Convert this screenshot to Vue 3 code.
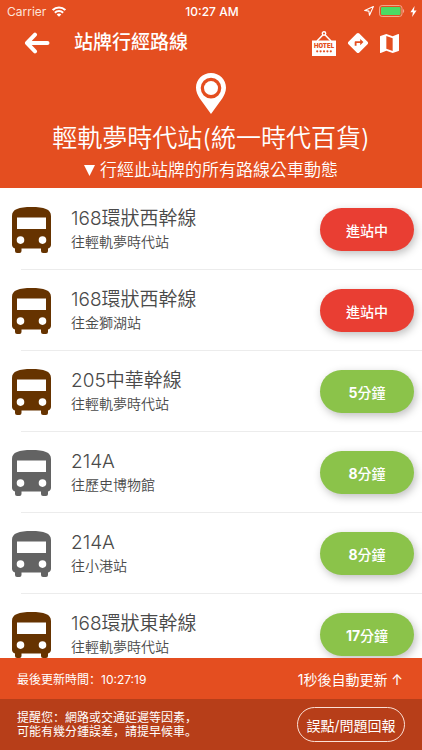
<template>
  <div class="page">
    <header class="header">
      <div class="status-bar">
        <div class="carrier">
          <span>Carrier</span>
          <svg width="14" height="11" viewBox="0 0 14 11" aria-hidden="true">
            <g fill="none" stroke="#fff" stroke-width="2.1">
              <path d="M0.7 4.1a9 9 0 0 1 12.6 0" />
              <path d="M2.9 6.7a5.8 5.8 0 0 1 8.2 0" />
            </g>
            <path fill="#fff" d="M7 10.8 4.7 8.5a3.1 3.1 0 0 1 4.6 0z" />
          </svg>
        </div>
        <span class="clock">10:27 AM</span>
        <div class="indicators">
          <svg width="10" height="10" viewBox="0 0 10 10" aria-hidden="true">
            <path fill="none" stroke="currentColor" stroke-width="1.1" stroke-linejoin="round" d="M9.4 0.6 0.7 4.5l4.2.6.6 4.2z" />
          </svg>
          <svg width="26" height="12" viewBox="0 0 26 12" aria-hidden="true">
            <rect x="0.5" y="0.5" width="22.5" height="11" rx="2.6" fill="none" stroke="#f3a58c" />
            <rect x="2" y="2" width="19.5" height="8" rx="1.2" fill="#4cd964" />
            <path d="M24 4v4c1.6-.6 1.6-3.4 0-4z" fill="#f3a58c" />
          </svg>
          <svg width="7" height="11" viewBox="0 0 7 11" aria-hidden="true">
            <path fill="currentColor" d="M4.6 0 0.4 6.2h2.5L2.1 11l4.5-6.5H3.9z" />
          </svg>
        </div>
      </div>

      <nav class="toolbar">
        <button class="icon-btn" aria-label="返回" @click="goBack">
          <svg width="26" height="22" viewBox="0 0 26 22" fill="none" stroke="currentColor" stroke-width="4" stroke-linecap="round" stroke-linejoin="round">
            <path d="M11 2.6 3 11l8 8.4M3.6 11H23.5" />
          </svg>
        </button>
        <h1>站牌行經路線</h1>
        <div class="actions">
          <button class="icon-btn" aria-label="附近旅館">
            <svg width="24" height="25" viewBox="0 0 24 25">
              <path fill="none" stroke="currentColor" stroke-width="1.5" d="M5 10 10.8 4M19 10 13.2 4" />
              <circle cx="12" cy="2.5" r="1.7" fill="none" stroke="currentColor" stroke-width="1.4" />
              <path fill="currentColor" d="M0 9.5h24V25H0z" />
              <text x="12" y="17" class="hotel-text" text-anchor="middle">HOTEL</text>
              <g fill="#e44e20">
                <circle v-for="n in 5" :key="n" :cx="n * 3.4 + 1.8" cy="20.3" r="1.1" />
              </g>
            </svg>
          </button>
          <button class="icon-btn" aria-label="路線規劃">
            <svg width="22" height="22" viewBox="0 0 24 24">
              <path fill="currentColor" d="m22.43 10.59-9.01-9.01c-.75-.75-2.07-.76-2.83 0l-9 9c-.78.78-.78 2.04 0 2.82l9 9c.39.39.9.58 1.41.58.51 0 1.02-.19 1.41-.58l8.99-8.99c.79-.76.8-2.02.03-2.82zM14.4 14.5V12h-4v3h-2v-4c0-.55.45-1 1-1h5V7.5l3.5 3.5-3.5 3.5z" />
            </svg>
          </button>
          <button class="icon-btn" aria-label="地圖">
            <svg width="19" height="19" viewBox="3 3 18 18">
              <path fill="currentColor" d="m20.5 3-.16.03L15 5.1 9 3 3.36 4.9c-.21.07-.36.25-.36.48V20.5c0 .28.22.5.5.5l.16-.03L9 18.9l6 2.1 5.64-1.9c.21-.07.36-.25.36-.48V3.5c0-.28-.22-.5-.5-.5zM15 19l-6-2.11V5l6 2.11V19z" />
            </svg>
          </button>
        </div>
      </nav>

      <div class="stop">
        <svg width="30" height="41" viewBox="0 0 30 41" aria-hidden="true">
          <path fill="currentColor" fill-rule="evenodd" d="M15 0C6.6 0 0 6.5 0 14.8 0 18.6 1.6 22 3.6 25.2L15 41l11.4-15.8C28.4 22 30 18.6 30 14.8 30 6.5 23.4 0 15 0zm0 4.8a10.3 10.3 0 1 1 0 20.6 10.3 10.3 0 0 1 0-20.6z" />
          <circle cx="15" cy="15.1" r="7" fill="currentColor" />
        </svg>
        <h2>輕軌夢時代站(統一時代百貨)</h2>
        <p>
          <svg width="11" height="11" viewBox="0 0 11 11" aria-hidden="true">
            <path fill="currentColor" d="M0 0h11L5.500 11z" />
          </svg>
          行經此站牌的所有路線公車動態
        </p>
      </div>
    </header>

    <main class="routes">
      <ul>
        <li v-for="(route, index) in routes" :key="index">
          <svg class="bus" :class="route.color" width="39" height="46" viewBox="0 0 39 46" aria-hidden="true">
            <path fill="currentColor" fill-rule="evenodd" d="M0 9C0 2 7 0 19.5 0S39 2 39 9v28.5c0 2-1 3.5-3 4V44a2 2 0 0 1-2 2h-3a2 2 0 0 1-2-2v-2.5H9.5V44a2 2 0 0 1-2 2H5a2 2 0 0 1-2-2v-2.5c-2-.5-3-2-3-4zM5 10.5V22h29V10.5zM8.500 29.300a3.800 3.800 0 1 0 0 7.600 3.800 3.800 0 0 0 0-7.600zm22 0a3.800 3.800 0 1 0 0 7.600 3.800 3.800 0 0 0 0-7.600z" />
          </svg>
          <div class="info">
            <h3>{{ route.name }}</h3>
            <p>往{{ route.to }}</p>
          </div>
          <button v-if="route.minutes === 0" class="arrival arriving">進站中</button>
          <button v-else class="arrival"><b>{{ route.minutes }}</b>分鐘</button>
        </li>
      </ul>
    </main>

    <footer>
      <div class="update-bar">
        <span>最後更新時間：{{ lastUpdate }}</span>
        <button class="refresh">{{ countdown }}秒後自動更新 ↑</button>
      </div>
      <div class="notice">
        <p>提醒您：網路或交通延遲等因素，<br />可能有幾分鍾誤差，請提早候車。</p>
        <button class="report">誤點/問題回報</button>
      </div>
    </footer>
  </div>
</template>

<script setup>
import { ref } from 'vue';

const lastUpdate = ref('10:27:19');
const countdown = ref(1);

// minutes 為 0 表示進站中
const routes = ref([
  { name: '168環狀西幹線', to: '輕軌夢時代站', minutes: 0, color: 'brown' },
  { name: '168環狀西幹線', to: '金獅湖站', minutes: 0, color: 'brown' },
  { name: '205中華幹線', to: '輕軌夢時代站', minutes: 5, color: 'brown' },
  { name: '214A', to: '歷史博物館', minutes: 8, color: 'gray' },
  { name: '214A', to: '小港站', minutes: 8, color: 'gray' },
  { name: '168環狀東幹線', to: '輕軌夢時代站', minutes: 17, color: 'brown' }
]);

const goBack = () => {
  window.history.back();
};
</script>

<style>
body {
  margin: 0;
}
</style>

<style scoped>
.page {
  display: flex;
  flex-direction: column;
  height: 100vh;
  background-color: #fff;
  font-family: Inter, "Noto Sans CJK TC", sans-serif;
}

h1, h2, h3, p, ul {
  margin: 0;
  padding: 0;
}

button {
  padding: 0;
  border: none;
  background: none;
  color: inherit;
  font-family: inherit;
  cursor: pointer;
}

svg {
  display: block;
  flex-shrink: 0;
}

.header {
  background-color: #e44e20;
  color: #fff;
}

.status-bar {
  display: grid;
  grid-template-columns: 1fr auto 1fr;
  align-items: center;
  height: 22px;
  padding: 0 5px 0 7px;
  font-size: 12px;
}

.carrier {
  display: flex;
  align-items: center;
  gap: 6px;
  color: #fde3da;
}

.clock {
  font-weight: 500;
}

.indicators {
  display: flex;
  align-items: center;
  justify-content: flex-end;
  gap: 5px;
}

.toolbar {
  display: flex;
  align-items: center;
  height: 42px;
  padding: 0 23px 0 24px;
}

.toolbar h1 {
  flex: 1;
  margin-left: 24px;
  font-size: 19px;
  line-height: 28px;
  font-weight: 500;
}

.actions {
  display: flex;
  align-items: center;
  gap: 11px;
}

.hotel-text {
  fill: #e44e20;
  font-size: 6px;
  font-weight: 900;
}

.stop {
  display: flex;
  flex-direction: column;
  align-items: center;
  padding: 9px 16px 6px;
}

.stop h2 {
  margin-top: 6px;
  font-size: 25px;
  line-height: 36px;
  font-weight: 350;
}

.stop p {
  display: flex;
  align-items: center;
  gap: 5px;
  padding-top: 2px;
  font-size: 17px;
  line-height: 24px;
  font-weight: 350;
}

.routes {
  flex: 1;
  min-height: 0;
  overflow: hidden;
}

.routes ul {
  padding-top: 1px;
  list-style: none;
}

.routes li {
  display: flex;
  align-items: center;
  height: 81px;
  padding: 0 8px 0 12px;
  background: linear-gradient(#ececec, #ececec) 21px 100% / 100% 1px no-repeat;
}

.brown {
  color: #663300;
}

.gray {
  color: #636363;
}

.info {
  flex: 1;
  margin-left: 20px;
  color: #4a4a4a;
}

.info h3 {
  font-size: 19px;
  line-height: 24px;
  font-weight: 350;
}

.info p {
  font-size: 14px;
  line-height: 22px;
  font-weight: 350;
}

.arrival {
  width: 94px;
  height: 43px;
  border-radius: 22px;
  background-color: #8bc34a;
  box-shadow: 2px 3px 8px rgba(0, 0, 0, 0.25);
  color: #fff;
  font-size: 14px;
  font-weight: 500;
}

.arrival b {
  font-weight: 700;
}

.arriving {
  background-color: #e93e33;
}

.update-bar,
.notice {
  display: flex;
  align-items: center;
  justify-content: space-between;
  padding: 0 17px;
  color: #fff;
  font-family: Inter, "Noto Sans CJK SC", sans-serif;
}

.update-bar {
  height: 41px;
  padding-right: 19px;
  background-color: #e44e20;
  font-size: 12px;
}

.refresh {
  font-size: 14px;
}

.notice {
  height: 51px;
  background-color: #b73e19;
  font-size: 12px;
  line-height: 14px;
}

.report {
  width: 108px;
  height: 35px;
  border: 1px solid #fbe0d6;
  border-radius: 18px;
  font-size: 14px;
}
</style>
